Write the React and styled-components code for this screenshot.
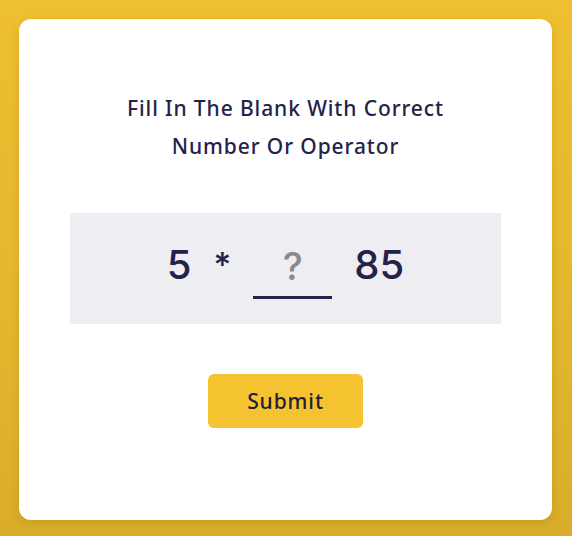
import React from 'react'
import styled, { createGlobalStyle } from 'styled-components'

const GlobalStyle = createGlobalStyle`
  html, body {
    margin: 0;
    padding: 0;
  }
  body {
    font-family: "Noto Sans", "Open Sans", sans-serif;
    background: linear-gradient(180deg, #edbf31 0%, #e3b62d 60%, #d9ad29 100%);
    min-height: 100vh;
  }
`

const Page = styled.div`
  box-sizing: border-box;
  min-height: 100vh;
  padding: 19px 20px 16px 19px;
  display: flex;
`

const Card = styled.div`
  box-sizing: border-box;
  width: 533px;
  height: 501px;
  background: #ffffff;
  border-radius: 12px;
  box-shadow: 0 3px 8px rgba(120, 90, 0, 0.18);
  padding: 70px 51px 0;
  display: flex;
  flex-direction: column;
  align-items: center;
`

const Title = styled.h1`
  margin: 0;
  font-family: "Noto Sans", sans-serif;
  font-size: 21px;
  font-weight: 500;
  line-height: 38px;
  color: #24224a;
  text-align: center;
  letter-spacing: 0.9px;
`

const EquationBox = styled.div`
  margin-top: 48px;
  width: 100%;
  height: 111px;
  background: #ededf2;
  display: flex;
  align-items: center;
  justify-content: center;
  gap: 22px;
`

const Token = styled.span`
  font-family: Inter, "Liberation Sans", sans-serif;
  font-size: ${(p) => (p.$op ? '34px' : '40px')};
  font-weight: 500;
  color: #24224a;
  line-height: 1;
  margin-bottom: 8px;
`

const BlankInput = styled.input`
  box-sizing: border-box;
  width: 79px;
  height: 62px;
  margin-top: -2px;
  border: none;
  border-bottom: 3px solid #24224a;
  background: transparent;
  outline: none;
  text-align: center;
  font-family: Inter, "Liberation Sans", sans-serif;
  font-size: 38px;
  font-weight: 500;
  color: #24224a;
  padding: 0;

  &::placeholder {
    color: #8a8a8e;
  }
`

const SubmitButton = styled.button`
  margin-top: 50px;
  width: 155px;
  height: 54px;
  border: none;
  border-radius: 6px;
  background: #f5c330;
  font-family: "Noto Sans", sans-serif;
  font-size: 21px;
  font-weight: 500;
  letter-spacing: 0.9px;
  color: #211f3a;
  cursor: pointer;
`

export default function App() {
  return (
    <>
      <GlobalStyle />
      <Page>
        <Card>
          <Title>
            Fill In The Blank With Correct
            <br />
            Number Or Operator
          </Title>
          <EquationBox>
            <Token>5</Token>
            <Token $op>*</Token>
            <BlankInput placeholder="?" />
            <Token>85</Token>
          </EquationBox>
          <SubmitButton>Submit</SubmitButton>
        </Card>
      </Page>
    </>
  )
}
